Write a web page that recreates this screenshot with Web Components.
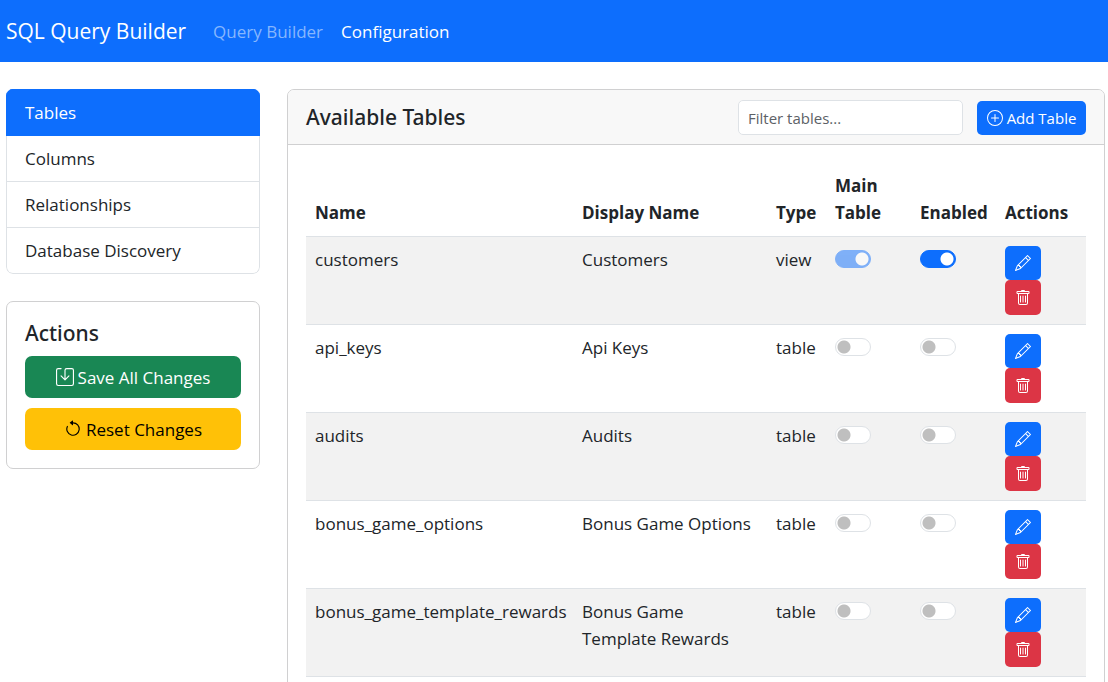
<!DOCTYPE html>
<html lang="en">
<head>
<meta charset="utf-8">
<meta name="viewport" content="width=device-width, initial-scale=1">
<title>SQL Query Builder</title>
<style>
  html { scrollbar-width: none; }
  body {
    margin: 0;
    background: #fff;
    color: #212529;
    font: 17px/27px "Segoe UI", "Open Sans", "Noto Sans", sans-serif;
  }
</style>
</head>
<body>
<query-builder-app></query-builder-app>

<script>
const ICONS = {
  plus: '<path d="M8 15A7 7 0 1 1 8 1a7 7 0 0 1 0 14m0 1A8 8 0 1 0 8 0a8 8 0 0 0 0 16"/><path d="M8 4a.5.5 0 0 1 .5.5v3h3a.5.5 0 0 1 0 1h-3v3a.5.5 0 0 1-1 0v-3h-3a.5.5 0 0 1 0-1h3v-3A.5.5 0 0 1 8 4"/>',
  pencil: '<path d="M12.146.146a.5.5 0 0 1 .708 0l3 3a.5.5 0 0 1 0 .708l-10 10a.5.5 0 0 1-.168.11l-5 2a.5.5 0 0 1-.65-.65l2-5a.5.5 0 0 1 .11-.168zM11.207 2.5 13.5 4.793 14.793 3.5 12.5 1.207zm1.586 3L10.5 3.207 4 9.707V10h.5a.5.5 0 0 1 .5.5v.5h.5a.5.5 0 0 1 .5.5v.5h.293zm-9.761 5.175-.106.106-1.528 3.821 3.821-1.528.106-.106A.5.5 0 0 1 5 12.5V12h-.5a.5.5 0 0 1-.5-.5V11h-.5a.5.5 0 0 1-.468-.325"/>',
  trash: '<path d="M5.5 5.5A.5.5 0 0 1 6 6v6a.5.5 0 0 1-1 0V6a.5.5 0 0 1 .5-.5m2.5 0a.5.5 0 0 1 .5.5v6a.5.5 0 0 1-1 0V6a.5.5 0 0 1 .5-.5m3 .5a.5.5 0 0 0-1 0v6a.5.5 0 0 0 1 0z"/><path d="M14.5 3a1 1 0 0 1-1 1H13v9a2 2 0 0 1-2 2H5a2 2 0 0 1-2-2V4h-.5a1 1 0 0 1-1-1V2a1 1 0 0 1 1-1H6a1 1 0 0 1 1-1h2a1 1 0 0 1 1 1h3.5a1 1 0 0 1 1 1zM4.118 4 4 4.059V13a1 1 0 0 0 1 1h6a1 1 0 0 0 1-1V4.059L11.882 4zM2.5 3h11V2h-11z"/>',
  save: '<path d="M2 1a1 1 0 0 0-1 1v12a1 1 0 0 0 1 1h12a1 1 0 0 0 1-1V2a1 1 0 0 0-1-1H9.5a1 1 0 0 0-1 1v7.293l2.646-2.647a.5.5 0 0 1 .708.708l-3.5 3.5a.5.5 0 0 1-.708 0l-3.5-3.5a.5.5 0 1 1 .708-.708L7.5 9.293V2a2 2 0 0 1 2-2H14a2 2 0 0 1 2 2v12a2 2 0 0 1-2 2H2a2 2 0 0 1-2-2V2a2 2 0 0 1 2-2h2.5a.5.5 0 0 1 0 1z"/>',
  reset: '<path fill-rule="evenodd" d="M8 3a5 5 0 1 1-4.546 2.914.5.5 0 0 0-.908-.417A6 6 0 1 0 8 2z"/><path d="M8 4.466V.534a.25.25 0 0 0-.41-.192L5.23 2.308a.25.25 0 0 0 0 .384l2.36 1.966A.25.25 0 0 0 8 4.466"/>'
};

const define = (name, html) => customElements.define(name, class extends HTMLElement {
  constructor() {
    super();
    this.attachShadow({ mode: 'open' }).innerHTML = html;
  }
});

customElements.define('app-icon', class extends HTMLElement {
  connectedCallback() {
    if (this.shadowRoot) return;
    this.attachShadow({ mode: 'open' }).innerHTML = `
      <style>
        :host { display: block; width: var(--icon-size, 16px); height: var(--icon-size, 16px); }
        svg { display: block; width: 100%; height: 100%; fill: currentColor; }
      </style>
      <svg viewBox="0 0 16 16" aria-hidden="true">${ICONS[this.getAttribute('name')]}</svg>`;
  }
});

customElements.define('app-button', class extends HTMLElement {
  connectedCallback() {
    if (this.shadowRoot) return;
    const label = this.getAttribute('label');
    this.attachShadow({ mode: 'open' }).innerHTML = `
      <style>
        :host { display: block; --bg: #0d6efd; --fg: #fff; }
        :host([variant="success"]) { --bg: #198754; }
        :host([variant="warning"]) { --bg: #ffc107; --fg: #000; }
        :host([variant="danger"]) { --bg: #dc3545; }
        button {
          display: flex; align-items: center; justify-content: center; gap: 4px;
          box-sizing: border-box; width: 100%; height: 42px;
          margin: 0; padding: 0 9px; border: 0; border-radius: 7px;
          background: var(--bg); color: var(--fg); font: inherit; white-space: nowrap; cursor: pointer;
        }
        :host([size="sm"]) button { height: 34px; border-radius: 5px; font-size: 15px; }
        :host([size="icon"]) button { height: 100%; padding: 0; border-radius: 5px; }
      </style>
      <button type="button" ${label ? `aria-label="${label}"` : ''}><app-icon name="${this.getAttribute('icon')}"></app-icon><slot></slot></button>`;
  }
});

customElements.define('toggle-switch', class extends HTMLElement {
  connectedCallback() {
    if (this.shadowRoot) return;
    const on = this.hasAttribute('on') ? 'checked' : '';
    const off = this.hasAttribute('locked') ? 'disabled' : '';
    this.attachShadow({ mode: 'open' }).innerHTML = `
      <style>
        :host { display: block; padding-top: 4px; }
        input {
          appearance: none; display: block; box-sizing: border-box; width: 36px; height: 18px; margin: 0;
          border: 1px solid #dee2e6; border-radius: 9px;
          background: radial-gradient(circle, #bfbfbf 0 6px, transparent 7px) left center / 16px 16px no-repeat #fff;
        }
        input:checked {
          border-color: #0d6efd;
          background: radial-gradient(circle, #fff 0 6px, transparent 7px) right center / 16px 16px no-repeat #0d6efd;
        }
        input:disabled { opacity: .5; }
      </style>
      <input type="checkbox" role="switch" aria-label="${this.getAttribute('label')}" ${on} ${off}>`;
  }
});

define('app-navbar', `
  <style>
    :host { display: block; background: #0d6efd; }
    nav { display: flex; align-items: center; height: 62px; padding: 0 6px; }
    a { color: #fff; text-decoration: none; white-space: nowrap; }
    .brand { margin-right: 27px; font-size: 21px; }
    .links { display: flex; gap: 18px; }
    .links a:first-child { color: #86b7fe; }
  </style>
  <nav>
    <a class="brand" href="#">SQL Query Builder</a>
    <div class="links"><a href="#builder">Query Builder</a><a href="#configuration" aria-current="page">Configuration</a></div>
  </nav>`);

define('section-list', `
  <style>
    :host { display: block; border-radius: 7px; overflow: hidden; }
    a { display: block; padding: 9px 18px; border: 1px solid #dee2e6; border-top: 0; color: #212529; text-decoration: none; }
    a:first-of-type { border-top: 1px solid #dee2e6; }
    a:last-of-type { border-radius: 0 0 7px 7px; }
    a[aria-current] { background: #0d6efd; border-color: #0d6efd; color: #fff; }
  </style>
  <a href="#tables" aria-current="true">Tables</a>
  <a href="#columns">Columns</a>
  <a href="#relationships">Relationships</a>
  <a href="#discovery">Database Discovery</a>`);

define('action-panel', `
  <style>
    :host { display: block; padding: 18px; border: 1px solid #d0d0d1; border-radius: 7px; }
    h5 { margin: 0 0 9px; font: 500 21px/27px "Segoe UI", "Noto Sans", sans-serif; }
    div { display: grid; gap: 10px; --icon-size: 18px; }
  </style>
  <h5>Actions</h5>
  <div>
    <app-button variant="success" icon="save">Save All Changes</app-button>
    <app-button variant="warning" icon="reset">Reset Changes</app-button>
  </div>`);

const TABLES = [
  ['customers', 'Customers', 'view', true],
  ['api_keys', 'Api Keys', 'table', false],
  ['audits', 'Audits', 'table', false],
  ['bonus_game_options', 'Bonus Game Options', 'table', false],
  ['bonus_game_template_rewards', 'Bonus Game Template Rewards', 'table', false]
];

define('tables-grid', `
  <style>
    :host { display: block; }
    table { width: 100%; table-layout: fixed; border-collapse: separate; border-spacing: 0; }
    .name { width: 267px; } .type { width: 59px; } .flag { width: 85px; } .tools { width: 90px; }
    th { padding: 9px 9px 10px; text-align: left; vertical-align: bottom; font-weight: 700; border-bottom: 1px solid #dee2e6; }
    td { padding: 9px; vertical-align: top; border-bottom: 1px solid #dee2e6; }
    tbody tr:nth-child(odd) { background: #f2f2f2; }
    .buttons { display: grid; grid-template-rows: 34px 35px; width: 36px; }
  </style>
  <table>
    <colgroup><col class="name"><col><col class="type"><col class="flag"><col class="flag"><col class="tools"></colgroup>
    <thead><tr><th>Name</th><th>Display Name</th><th>Type</th><th>Main Table</th><th>Enabled</th><th>Actions</th></tr></thead>
    <tbody>${TABLES.map(([name, display, type, on]) => `
      <tr>
        <td>${name}</td><td>${display}</td><td>${type}</td>
        <td><toggle-switch label="Main table: ${name}" ${on ? 'on locked' : ''}></toggle-switch></td>
        <td><toggle-switch label="Enabled: ${name}" ${on ? 'on' : ''}></toggle-switch></td>
        <td><div class="buttons">
          <app-button size="icon" icon="pencil" label="Edit ${name}"></app-button>
          <app-button size="icon" icon="trash" variant="danger" label="Delete ${name}"></app-button>
        </div></td>
      </tr>`).join('')}
    </tbody>
  </table>`);

define('tables-panel', `
  <style>
    :host { display: block; border: 1px solid #d0d0d1; border-radius: 7px; overflow: hidden; }
    header { display: flex; align-items: center; justify-content: space-between; padding: 9px 18px; background: #f8f8f8; border-bottom: 1px solid #d0d0d1; }
    h5 { margin: 0; font: 500 21px/27px "Segoe UI", "Noto Sans", sans-serif; }
    .controls { display: flex; align-items: end; gap: 14px; height: 36px; }
    input {
      box-sizing: border-box; width: 225px; height: 35px; margin: 0; padding: 0 9px;
      border: 1px solid #dee2e6; border-radius: 5px; background: #fff; color: #212529;
      font: inherit; font-size: 15px;
    }
    input::placeholder { color: #5c6166; opacity: 1; }
    app-button { width: 109px; }
    section { padding: 18px; }
  </style>
  <header>
    <h5>Available Tables</h5>
    <div class="controls">
      <input type="text" placeholder="Filter tables..." aria-label="Filter tables">
      <app-button size="sm" icon="plus">Add Table</app-button>
    </div>
  </header>
  <section><tables-grid></tables-grid></section>`);

define('query-builder-app', `
  <style>
    :host { display: block; }
    main { display: grid; grid-template-columns: 254px minmax(0, 1fr); gap: 27px; align-items: start; padding: 27px 3px 27px 6px; }
    aside { display: grid; gap: 27px; }
  </style>
  <app-navbar></app-navbar>
  <main>
    <aside><section-list></section-list><action-panel></action-panel></aside>
    <tables-panel></tables-panel>
  </main>`);
</script>
</body>
</html>
